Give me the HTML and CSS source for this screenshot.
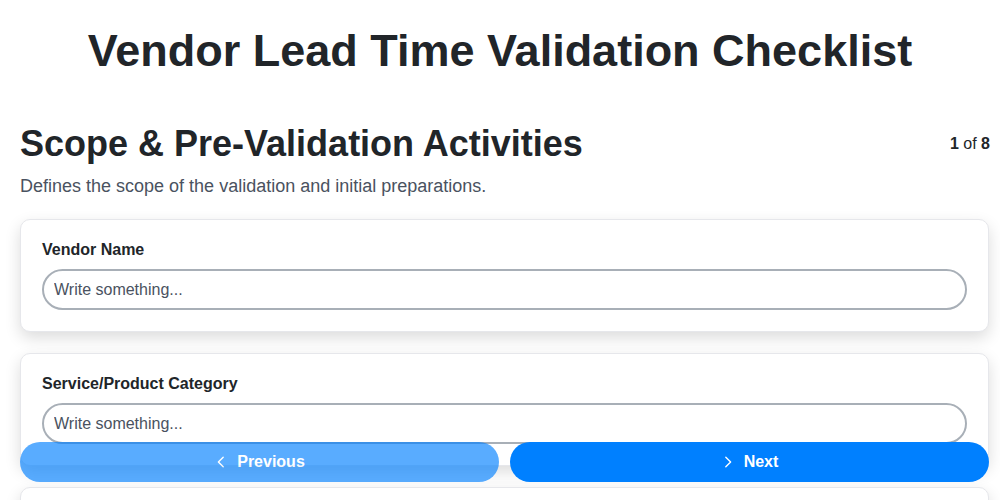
FILE: index.html
```html
<!DOCTYPE html>
<html lang="en">
<head>
    <meta charset="UTF-8">
    <meta name="viewport" content="width=device-width, initial-scale=1.0">
    <title>Vendor Lead Time Validation Checklist</title>
    <link rel="stylesheet" href="styles.css">
</head>
<body>
    <h1 class="page-title">Vendor Lead Time Validation Checklist</h1>

    <div class="section">
        <div class="section-header">
            <h2>Scope &amp; Pre-Validation Activities</h2>
            <span class="step-count"><b>1</b> of <b>8</b></span>
        </div>
        <p class="section-desc">Defines the scope of the validation and initial preparations.</p>

        <div class="field-card">
            <label for="vendor-name">Vendor Name</label>
            <input type="text" id="vendor-name" placeholder="Write something...">
        </div>

        <div class="field-card">
            <label for="category">Service/Product Category</label>
            <input type="text" id="category" placeholder="Write something...">
        </div>

        <div class="field-card">
            <label for="contact">Vendor Contact Person</label>
            <input type="text" id="contact" placeholder="Write something...">
        </div>
    </div>

    <div class="nav-buttons">
        <a href="#" class="nav-btn prev">
            <svg width="14" height="14" viewBox="0 0 16 16"><path d="M10.5 2.5 5 8l5.5 5.5" fill="none" stroke="currentColor" stroke-width="1.6" stroke-linecap="round" stroke-linejoin="round"/></svg>
            Previous
        </a>
        <a href="#" class="nav-btn next">
            <svg width="14" height="14" viewBox="0 0 16 16"><path d="M5.5 2.5 11 8l-5.5 5.5" fill="none" stroke="currentColor" stroke-width="1.6" stroke-linecap="round" stroke-linejoin="round"/></svg>
            Next
        </a>
    </div>
</body>
</html>
```

FILE: styles.css
```css
body {
    font-family: 'Liberation Sans', Arial, sans-serif;
    background-color: #fff;
    color: #212529;
    margin: 0;
    padding: 0;
}

.page-title {
    margin: 26px 0 0;
    text-align: center;
    font-size: 45px;
    line-height: 50px;
    font-weight: bold;
}

.section {
    margin-top: 47px;
    padding: 0 11px 0 20px;
}

.section-header {
    display: flex;
    justify-content: space-between;
    align-items: center;
}

.section-header h2 {
    margin: 0;
    font-size: 36px;
    line-height: 42px;
}

.step-count {
    font-size: 16px;
    margin-right: -1px;
}

.section-desc {
    margin: 11px 0 22px;
    font-size: 18px;
    line-height: 21px;
    color: #4a5260;
}

.field-card {
    background-color: #fff;
    border: 1px solid #e6e7eb;
    border-radius: 10px;
    box-shadow: 0 6px 16px rgba(0, 0, 0, 0.14);
    padding: 20px 21px 21px;
    margin-bottom: 21px;
}

.field-card label {
    display: block;
    font-weight: bold;
    font-size: 16px;
    line-height: 20px;
    margin-bottom: 9px;
}

.field-card input {
    display: block;
    width: 100%;
    box-sizing: border-box;
    border: 2px solid #a8afb7;
    border-radius: 22px;
    padding: 9px 10px;
    font-family: inherit;
    font-size: 16px;
    line-height: 19px;
    color: #212529;
    outline: none;
}

.field-card input::placeholder {
    color: #4a5260;
}

.nav-buttons {
    position: fixed;
    left: 20px;
    right: 11px;
    bottom: 18px;
    display: flex;
    gap: 11px;
}

.nav-btn {
    flex: 1;
    display: flex;
    align-items: center;
    justify-content: center;
    gap: 9px;
    height: 40px;
    border-radius: 20px;
    background-color: #0080ff;
    color: #fff;
    text-decoration: none;
    font-weight: bold;
    font-size: 16px;
}

.nav-btn.prev {
    opacity: 0.65;
}
```
